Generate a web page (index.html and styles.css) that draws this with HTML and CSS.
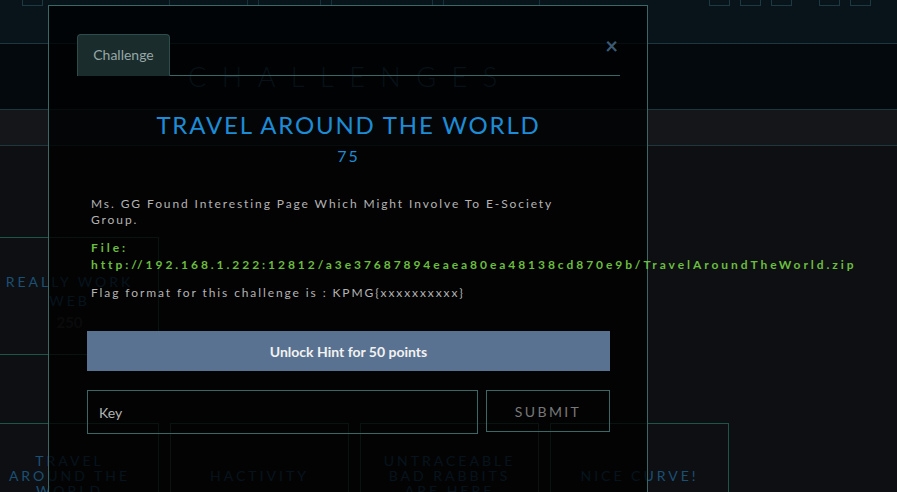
FILE: index.html
```html
<!DOCTYPE html>
<html>
<head>
<meta charset="utf-8">
<link rel="stylesheet" href="styles.css">
</head>
<body>
<div class="page">
  <header class="topbar">
    <span class="tbox first"></span>
    <nav class="menu">
      <span class="mitem w78"></span>
      <span class="mitem w62"></span>
      <span class="mitem w101"></span>
      <span class="mitem w96"></span>
    </nav>
    <div class="icons">
      <span class="tbox"></span>
      <span class="tbox"></span>
      <span class="tbox"></span>
      <span class="tbox wide"></span>
      <span class="tbox"></span>
    </div>
  </header>
  <section class="hero"><h1>CHALLENGES</h1></section>
  <div class="band"></div>
  <main class="board">
    <div class="row">
      <div class="card tall">
        <div class="cname">REALLY WORK WEB</div>
        <div class="cpts">250</div>
      </div>
    </div>
    <div class="row second">
      <div class="card"><div class="cname sm">TRAVEL AROUND THE WORLD</div></div>
      <div class="card"><div class="cname sm">HACTIVITY</div></div>
      <div class="card"><div class="cname sm">UNTRACEABLE BAD RABBITS ARE HERE</div></div>
      <div class="card"><div class="cname sm">NICE CURVE!</div></div>
    </div>
  </main>
</div>

<div class="modal">
  <div class="tabs">
    <div class="tab">Challenge</div>
    <div class="close">&times;</div>
  </div>
  <div class="mbody">
    <h2 class="ctitle">TRAVEL AROUND THE WORLD</h2>
    <div class="cvalue">75</div>
    <p class="desc">Ms. GG Found Interesting Page Which Might Involve To E-Society Group.</p>
    <p class="file">File: http://192.168.1.222:12812/a3e37687894eaea80ea48138cd870e9b/TravelAroundTheWorld.zip</p>
    <p class="desc flag">Flag format for this challenge is : KPMG{xxxxxxxxxx}</p>
    <button class="hint">Unlock Hint for 50 points</button>
    <div class="keyrow">
      <input class="key" type="text" placeholder="Key">
      <button class="submit">SUBMIT</button>
    </div>
  </div>
</div>
</body>
</html>
```

FILE: styles.css
```css
* { box-sizing: border-box; }
html, body {
  margin: 0;
  padding: 0;
  width: 897px;
  height: 492px;
  overflow: hidden;
  background: #0d0f12;
  font-family: Lato, "Open Sans", sans-serif;
}
.page { position: relative; }

.topbar {
  height: 44px;
  background: #08131a;
  border-bottom: 1px solid #1c383e;
  display: flex;
  align-items: flex-start;
}
.tbox {
  display: block;
  width: 21px;
  height: 20px;
  margin-top: -14px;
  border: 1px solid #1d3a42;
}
.tbox.first { margin-left: 22px; }
.menu { display: flex; margin-left: 126px; }
.mitem {
  display: block;
  height: 20px;
  margin-top: -14px;
  border: 1px solid #17313a;
  margin-right: 10px;
}
.w78 { width: 79px; }
.w62 { width: 63px; }
.w101 { width: 102px; }
.w96 { width: 97px; }
.icons { display: flex; gap: 10px; margin-left: 159px; }
.icons .tbox.wide { margin-left: 17px; }

.hero {
  height: 66px;
  background: #03090d;
  border-bottom: 1px solid #1c383e;
  display: flex;
  align-items: center;
  padding-left: 188px;
}
.hero h1 {
  margin: 0;
  font-weight: 300;
  font-size: 27px;
  letter-spacing: 15.5px;
  color: #1e4a60;
}
.band {
  height: 36px;
  background: #141619;
  border-bottom: 1px solid #1c383e;
}

.board { padding-top: 91px; margin-left: -20px; }
.row { display: flex; gap: 11px; }
.row.second { margin-top: 68px; }
.card {
  width: 179px;
  height: 104px;
  border: 1px solid #1d5546;
  display: flex;
  flex-direction: column;
  align-items: center;
  justify-content: center;
  text-align: center;
  padding: 0 20px;
}
.card.tall { height: 118px; justify-content: flex-start; padding-top: 34px; }
.cname {
  color: #1b4f74;
  font-size: 14px;
  letter-spacing: 3px;
  line-height: 19px;
}
.cname.sm { line-height: 15px; }
.cpts {
  margin-top: 3px;
  color: #2b2d30;
  font-weight: 700;
  font-size: 15px;
}

/* modal */
.modal {
  position: absolute;
  left: 48px;
  top: 5px;
  width: 600px;
  height: 520px;
  border: 1px solid #3b6767;
  background: rgba(0, 0, 0, 0.76);
  padding: 28px 27px 0 28px;
}
.tabs {
  display: flex;
  align-items: flex-start;
  border-bottom: 1px solid #3b6767;
  height: 42px;
}
.tab {
  height: 42px;
  width: 93px;
  margin-bottom: -1px;
  background: #1a2c2c;
  border: 1px solid #2d4d4d;
  border-bottom: none;
  border-radius: 4px 4px 0 0;
  color: #97a7a7;
  font-size: 14px;
  display: flex;
  align-items: center;
  justify-content: center;
  padding-bottom: 2px;
}
.close {
  margin-left: auto;
  margin-right: 2px;
  color: #3d5a74;
  font-size: 22px;
  font-weight: 700;
  line-height: 24px;
}
.mbody { padding: 0 10px; }
.ctitle {
  margin: 35px 0 0;
  text-align: center;
  font-weight: 400;
  font-size: 24px;
  line-height: 28px;
  letter-spacing: 1.8px;
  color: #1c8cd6;
}
.cvalue {
  margin-top: 7px;
  text-align: center;
  color: #1c8cd6;
  font-size: 16px;
  line-height: 20px;
  letter-spacing: 2px;
}
.desc {
  margin: 30px 0 0;
  padding: 0 30px 0 4px;
  color: #b3b3b3;
  font-size: 12px;
  line-height: 16px;
  letter-spacing: 1.9px;
}
.desc.flag { margin-top: 12px; }
.file {
  margin: 11px 0 0;
  padding: 0 4px;
  color: #6abd3e;
  font-weight: 700;
  font-size: 12px;
  line-height: 17px;
  letter-spacing: 2.95px;
}
.hint {
  display: block;
  width: 100%;
  height: 40px;
  margin-top: 30px;
  border: none;
  background: #5a7291;
  color: #f2f2f2;
  font-family: Lato, sans-serif;
  font-weight: 700;
  font-size: 14px;
}
.keyrow {
  display: flex;
  align-items: flex-start;
  gap: 8px;
  margin-top: 19px;
}
.key {
  flex: 0 0 391px;
  height: 44px;
  border: 1px solid #3b6767;
  background: transparent;
  padding: 0 11px;
  font-family: Lato, sans-serif;
  font-size: 14px;
  color: #b3b3b3;
  outline: none;
}
.key::placeholder { color: #b3b3b3; }
.submit {
  flex: 1;
  height: 42px;
  border: 1px solid #3b6767;
  background: transparent;
  color: #787878;
  font-family: Lato, sans-serif;
  font-size: 14px;
  letter-spacing: 2.4px;
}
```
